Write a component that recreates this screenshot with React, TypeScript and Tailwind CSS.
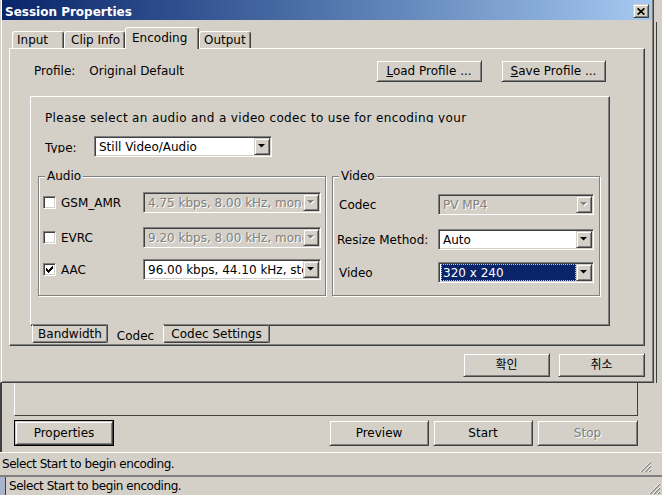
import React from "react";

// classic 3d edges
const raised =
  "border border-t-[#d4d0c8] border-l-[#d4d0c8] border-r-[#404040] border-b-[#404040] shadow-[inset_1px_1px_0_#fff,inset_-1px_-1px_0_#808080]";
const sunken =
  "border border-t-[#808080] border-l-[#808080] border-r-white border-b-white shadow-[inset_1px_1px_0_#404040,inset_-1px_-1px_0_#d4d0c8]";
const panel =
  "border border-t-white border-l-white border-r-[#404040] border-b-[#404040] shadow-[inset_-1px_-1px_0_#808080]";
const disabledText = "text-[#808080] [text-shadow:1px_1px_0_#fff]";

const Arrow = ({ disabled }: { disabled?: boolean }) => (
  <svg width="8" height="5" viewBox="0 0 8 5">
    {disabled && <polygon points="1,1 8,1 4.5,4.5" fill="#fff" />}
    <polygon points="0,0 7,0 3.5,3.5" fill={disabled ? "#808080" : "#000"} />
  </svg>
);

type ComboProps = { value: string; className: string; disabled?: boolean; selected?: boolean };

const Combo = ({ value, className, disabled, selected }: ComboProps) => (
  <div className={`flex h-[21px] shrink-0 p-px ${sunken} ${disabled ? "bg-[#d4d0c8]" : "bg-white"} ${className}`}>
    <div
      className={`flex min-w-0 flex-1 items-center overflow-hidden whitespace-nowrap ${
        selected ? "pl-px" : "pl-[3px]"
      } ${disabled ? disabledText : "text-black"}`}
    >
      {selected ? (
        <span className="flex h-full flex-1 items-center bg-[#0a246a] pl-[2px] text-white [outline:1px_dotted_#c8c8c8] [outline-offset:-1px]">
          {value}
        </span>
      ) : (
        value
      )}
    </div>
    <div className={`flex w-[16px] shrink-0 items-center justify-center bg-[#d4d0c8] ${raised}`}>
      <Arrow disabled={disabled} />
    </div>
  </div>
);

// 7x7 pixel check mark
const checkRows = [[6, 1], [5, 2], [0, 1, 4, 3], [0, 2, 3, 3], [0, 5], [1, 3], [2, 1]];

const Check = ({ checked }: { checked?: boolean }) => (
  <div className={`flex h-[13px] w-[13px] shrink-0 items-center justify-center bg-white ${sunken}`}>
    {checked && (
      <svg width="7" height="7" viewBox="0 0 7 7">
        {checkRows.map((r, y) =>
          r.length === 2 ? (
            <rect key={y} x={r[0]} y={y} width={r[1]} height="1" fill="#000" />
          ) : (
            <g key={y}>
              <rect x={r[0]} y={y} width={r[1]} height="1" fill="#000" />
              <rect x={r[2]} y={y} width={r[3]} height="1" fill="#000" />
            </g>
          )
        )}
      </svg>
    )}
  </div>
);

const Button = ({ label, className, disabled }: { label: React.ReactNode; className: string; disabled?: boolean }) => (
  <div className={`flex items-center justify-center bg-[#d4d0c8] ${raised} ${disabled ? disabledText : ""} ${className}`}>
    {label}
  </div>
);

const Grip = ({ className }: { className: string }) => (
  <svg width="12" height="12" viewBox="0 0 12 12" className={className}>
    <path d="M11 1L1 11M11 5L5 11M11 9L9 11" stroke="#808080" strokeWidth="1.2" />
    <path d="M11 0L0 11M11 4L4 11M11 8L8 11" stroke="#fff" strokeWidth="0.8" />
  </svg>
);

const TopTab = ({ label, className, active }: { label: string; className: string; active?: boolean }) =>
  active ? (
    <div
      className={`relative z-10 -mb-px flex h-[22px] rounded-t-[3px] border-l border-r border-t border-l-white border-r-[#404040] border-t-white bg-[#d4d0c8] pt-[3px] shadow-[inset_-1px_0_0_#808080] ${className}`}
    >
      {label}
    </div>
  ) : (
    <div
      className={`flex h-[17px] items-center rounded-t-[3px] border-l border-r border-t border-l-white border-r-[#404040] border-t-white shadow-[inset_-1px_0_0_#808080] ${className}`}
    >
      {label}
    </div>
  );

const BottomTab = ({ label, className }: { label: string; className: string }) => (
  <div
    className={`-mt-px flex h-[18px] items-center justify-center rounded-b-[2px] border-b border-l border-r border-b-[#404040] border-l-white border-r-[#404040] shadow-[inset_-1px_-1px_0_#808080] ${className}`}
  >
    {label}
  </div>
);

export default function App() {
  return (
    <div className="relative h-[495px] w-[662px] overflow-hidden bg-[#d4d0c8] font-['DejaVu_Sans','Noto_Sans_CJK_KR',sans-serif] text-[12px] leading-[14px] text-black">
      {/* main window underneath */}
      <div className="flex h-full flex-col">
        <div className="flex flex-1 justify-end">
          <div className="mr-[5px] mt-[22px] w-px bg-[#404040]" />
        </div>
        <div className="flex h-[69px] flex-col border-l-2 border-[#404040]">
          <div className="ml-[12px] h-[33px] w-[624px] border-b border-l border-r border-b-[#404040] border-l-white border-r-[#404040]" />
          <div className="mt-[3px] flex h-[27px] items-end">
            <div className="ml-[12px] h-[26px] w-[100px] border border-black">
              <Button label="Properties" className="h-full w-full" />
            </div>
            <Button label="Preview" className="ml-[215px] h-[26px] w-[100px]" />
            <Button label="Start" className="ml-[4px] h-[26px] w-[100px]" />
            <Button label="Stop" className="ml-[4px] h-[26px] w-[101px]" disabled />
          </div>
        </div>
        <div className="flex h-[23px] items-center border-t border-white pl-[2px]">
          <span className="flex-1 tracking-[-0.45px]">Select Start to begin encoding.</span>
          <Grip className="mr-[10px] mt-[6px]" />
        </div>
        <div className="flex h-[20px] border-t-2 border-[#808080]">
          <div className="w-[5px] bg-[#a9b3cb]" />
          <div className="w-px bg-[#404040]" />
          <span className="ml-[3px] flex-1 self-center tracking-[-0.45px]">Select Start to begin encoding.</span>
          <Grip className="mr-px self-end" />
        </div>
      </div>

      {/* Session Properties dialog */}
      <div className="absolute left-0 top-0 flex h-[383px] w-[654px] flex-col border-b border-l border-r border-b-[#404040] border-l-[#d4d0c8] border-r-[#404040] bg-[#d4d0c8] px-px pb-px shadow-[inset_1px_0_0_#fff,inset_-1px_-1px_0_#808080]">
        <div className="flex h-[20px] shrink-0 items-end bg-linear-to-r from-[#0a246a] to-[#a6caf0] pb-[2px] pr-[3px]">
          <span className="-mb-px self-end pl-[3px] font-bold text-white">Session Properties</span>
          <div className={`ml-auto flex h-[14px] w-[16px] items-center justify-center bg-[#d4d0c8] ${raised}`}>
            <svg width="8" height="7" viewBox="0 0 8 7">
              <path d="M0.6 0.3L7.4 6.7M7.4 0.3L0.6 6.7" stroke="#000" strokeWidth="1.6" />
            </svg>
          </div>
        </div>

        <div className="flex flex-1 flex-col px-[7px]">
          <div className="mt-[7px] flex h-[21px] items-end pl-[3px]">
            <TopTab label="Input" className="w-[52px] pl-[4px]" />
            <TopTab label="Clip Info" className="w-[61px] pl-[6px]" />
            <TopTab label="Encoding" className="w-[74px] pl-[6px]" active />
            <TopTab label="Output" className="w-[52px] pl-[4px]" />
          </div>

          <div className={`flex h-[298px] w-[636px] flex-col ${panel}`}>
            <div className="mt-[11px] flex h-[22px] items-center pl-[24px] pr-[38px]">
              <span>Profile:</span>
              <span className="ml-[14px]">Original Default</span>
              <Button
                label={
                  <span>
                    <span className="underline">L</span>oad Profile ...
                  </span>
                }
                className="ml-auto h-[22px] w-[106px]"
              />
              <Button
                label={
                  <span>
                    <span className="underline">S</span>ave Profile ...
                  </span>
                }
                className="ml-[19px] h-[22px] w-[105px]"
              />
            </div>

            <div className={`ml-[20px] mt-[14px] flex h-[230px] w-[580px] flex-col ${panel}`}>
              <div className="ml-[14px] mt-[14px] h-[12px] overflow-hidden whitespace-nowrap tracking-[0.35px]">
                Please select an audio and a video codec to use for encoding your
              </div>
              <div className="ml-[14px] mt-[13px] flex h-[21px] items-center">
                <div className="h-[12px] w-[49px] overflow-hidden">Type:</div>
                <Combo value="Still Video/Audio" className="w-[178px]" />
              </div>

              <div className="ml-[7px] mt-[12px] flex gap-[6px]">
                <fieldset className="h-[127px] w-[288px] shrink-0 border border-[#808080] shadow-[inset_1px_1px_0_#fff,1px_1px_0_#fff]">
                  <legend className="ml-[6px] bg-[#d4d0c8] px-[2px] leading-[14px]">Audio</legend>
                  <div className="mt-[9px] flex h-[21px] items-center">
                    <div className="ml-[4px]">
                      <Check />
                    </div>
                    <span className="ml-[5px] w-[82px]">GSM_AMR</span>
                    <Combo value="4.75 kbps, 8.00 kHz, mono" className="w-[178px]" disabled />
                  </div>
                  <div className="mt-[14px] flex h-[21px] items-center">
                    <div className="ml-[4px]">
                      <Check />
                    </div>
                    <span className="ml-[5px] w-[82px]">EVRC</span>
                    <Combo value="9.20 kbps, 8.00 kHz, mono" className="w-[178px]" disabled />
                  </div>
                  <div className="mt-[11px] flex h-[21px] items-center">
                    <div className="ml-[4px]">
                      <Check checked />
                    </div>
                    <span className="ml-[5px] w-[82px]">AAC</span>
                    <Combo value="96.00 kbps, 44.10 kHz, stereo" className="w-[178px]" />
                  </div>
                </fieldset>

                <fieldset className="h-[127px] w-[268px] shrink-0 border border-[#808080] shadow-[inset_1px_1px_0_#fff,1px_1px_0_#fff]">
                  <legend className="ml-[6px] bg-[#d4d0c8] px-[2px] leading-[14px]">Video</legend>
                  <div className="mt-[11px] flex h-[21px] items-center">
                    <span className="ml-[6px] w-[99px]">Codec</span>
                    <Combo value="PV MP4" className="w-[156px]" disabled />
                  </div>
                  <div className="mt-[14px] flex h-[21px] items-center">
                    <span className="ml-[4px] w-[101px]">Resize Method:</span>
                    <Combo value="Auto" className="w-[156px]" />
                  </div>
                  <div className="mt-[12px] flex h-[21px] items-center">
                    <span className="ml-[6px] w-[99px]">Video</span>
                    <Combo value="320 x 240" className="w-[156px]" selected />
                  </div>
                </fieldset>
              </div>
            </div>

            <div className="ml-[22px] flex h-[17px]">
              <BottomTab label="Bandwidth" className="w-[76px]" />
              <div className="relative z-10 -mt-[2px] flex h-[19px] w-[55px] justify-center bg-[#d4d0c8] pt-[5px]">
                Codec
              </div>
              <BottomTab label="Codec Settings" className="w-[107px]" />
            </div>
          </div>

          <div className="mt-[7px] flex justify-end gap-[8px]">
            <Button label="확인" className="h-[24px] w-[87px]" />
            <Button label="취소" className="h-[24px] w-[87px]" />
          </div>
        </div>
      </div>
    </div>
  );
}
